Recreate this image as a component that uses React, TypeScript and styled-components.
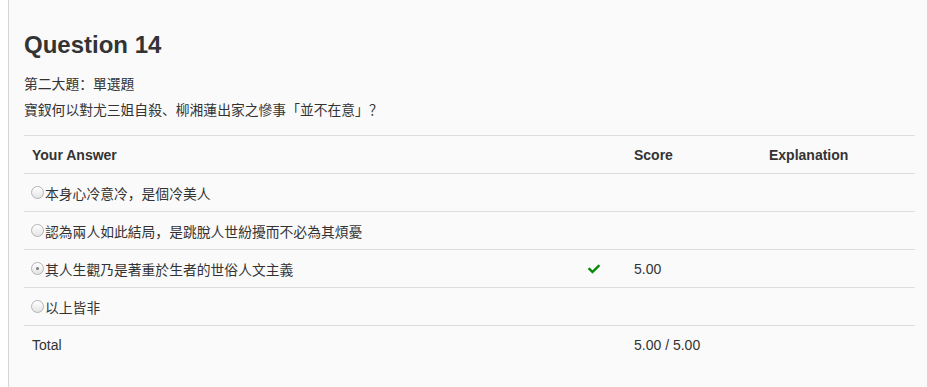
import React from "react";
import styled, { createGlobalStyle } from "styled-components";
import { FaCheck } from "react-icons/fa";

const Global = createGlobalStyle`
  html, body { margin: 0; padding: 0; background: #ffffff; }
  body { font-family: "Liberation Sans", "Noto Sans CJK SC", sans-serif; color: #333333; }
`;

const Page = styled.div`
  margin-left: 8px;
  border-left: 1px solid #d6d6d6;
  background: #fafafa;
  min-height: 100vh;
  padding: 32px 12px 0 15px;
  box-sizing: border-box;
`;

const Heading = styled.h2`
  margin: 0;
  font-size: 24px;
  line-height: 26px;
  font-weight: bold;
  color: #333333;
`;

const Prompt = styled.div`
  margin-top: 14px;
  font-size: 13.8px;
  line-height: 26px;
  font-family: "Liberation Sans", "Noto Sans CJK SC", sans-serif;
`;

const Table = styled.div`
  margin-top: 11px;
  display: flex;
  flex-direction: column;
  font-size: 14px;
`;

const Row = styled.div`
  display: grid;
  grid-template-columns: 602px 135px 1fr;
  height: 38px;
  box-sizing: border-box;
  border-top: 1px solid #dddddd;
  align-items: center;
`;

const Cell = styled.div<{ $bold?: boolean }>`
  padding: 0 8px;
  font-weight: ${(p) => (p.$bold ? "bold" : "normal")};
  display: flex;
  align-items: center;
  white-space: nowrap;
`;

const Radio = styled.span<{ $checked?: boolean }>`
  width: 13px;
  height: 13px;
  box-sizing: border-box;
  border-radius: 50%;
  border: 1px solid #b4b4b4;
  background: linear-gradient(#ffffff, #e4e4e4);
  margin-left: -1px;
  margin-right: 1px;
  display: inline-flex;
  align-items: center;
  justify-content: center;
  flex-shrink: 0;
  &::after {
    content: "";
    display: ${(p) => (p.$checked ? "block" : "none")};
    width: 3px;
    height: 3px;
    border-radius: 50%;
    background: #7a7a7a;
  }
`;

const Answer = styled.span`
  font-family: "Liberation Sans", "Noto Sans CJK SC", sans-serif;
  font-size: 13.8px;
`;

const Mark = styled.span`
  margin-left: auto;
  margin-right: 18px;
  color: #0a8a0a;
  display: inline-flex;
  align-items: center;
`;

const answers = [
  { text: "本身心冷意冷，是個冷美人", checked: false, score: "" },
  { text: "認為兩人如此結局，是跳脫人世紛擾而不必為其煩憂", checked: false, score: "" },
  { text: "其人生觀乃是著重於生者的世俗人文主義", checked: true, score: "5.00" },
  { text: "以上皆非", checked: false, score: "" },
];

export default function App() {
  return (
    <>
      <Global />
      <Page>
        <Heading>Question 14</Heading>
        <Prompt>
          <div>第二大題：單選題</div>
          <div>寶釵何以對尤三姐自殺、柳湘蓮出家之慘事「並不在意」？</div>
        </Prompt>
        <Table>
          <Row>
            <Cell $bold>Your Answer</Cell>
            <Cell $bold>Score</Cell>
            <Cell $bold>Explanation</Cell>
          </Row>
          {answers.map((a) => (
            <Row key={a.text}>
              <Cell>
                <Radio $checked={a.checked} />
                <Answer>{a.text}</Answer>
                {a.checked && (
                  <Mark>
                    <FaCheck size={12} />
                  </Mark>
                )}
              </Cell>
              <Cell>{a.score}</Cell>
              <Cell />
            </Row>
          ))}
          <Row>
            <Cell>Total</Cell>
            <Cell>5.00 / 5.00</Cell>
            <Cell />
          </Row>
        </Table>
      </Page>
    </>
  );
}
